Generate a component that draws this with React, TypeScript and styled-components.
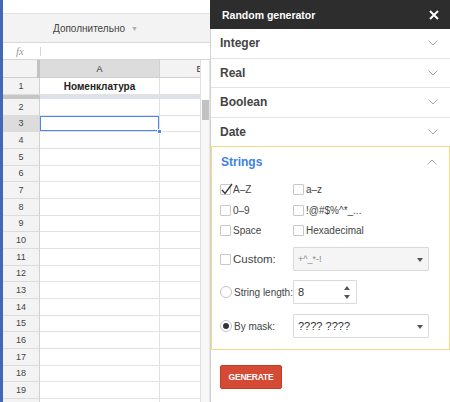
import React from 'react';
import styled, { createGlobalStyle } from 'styled-components';

const GlobalStyle = createGlobalStyle`
  html, body {
    margin: 0;
    padding: 0;
    background: #ffffff;
  }
  body {
    font-family: 'Liberation Sans', Arial, sans-serif;
  }
  * {
    box-sizing: border-box;
  }
`;

const Frame = styled.div`
  display: flex;
  width: 450px;
  height: 402px;
  overflow: hidden;
`;

/* ---------- spreadsheet ---------- */

const SheetPane = styled.div`
  width: 210px;
  flex-shrink: 0;
  display: flex;
  flex-direction: column;
  border-left: 3px solid #4369b2;
  overflow: hidden;
`;

const TopBlank = styled.div`
  height: 13px;
  background: #ffffff;
`;

const Toolbar = styled.div`
  height: 30px;
  display: flex;
  align-items: center;
  padding-left: 50px;
  background: #f3f3f3;
  border-top: 1px solid #e3e3e3;
  border-bottom: 1px solid #d9d9d9;
  font-size: 10px;
  color: #444;
`;

const MenuCaret = styled.span`
  margin-left: 6px;
  font-size: 7px;
  color: #aaa;
`;

const FormulaBar = styled.div`
  height: 17px;
  display: flex;
  align-items: center;
  padding-left: 13px;
  border-bottom: 1px solid #d6d6d6;
`;

const Fx = styled.span`
  font-family: 'Liberation Serif', serif;
  font-style: italic;
  font-size: 11px;
  color: #9a9a9a;
  width: 24px;
`;

const FxDivider = styled.span`
  width: 1px;
  height: 9px;
  background: #d6d6d6;
`;

const GridArea = styled.div`
  flex: 1;
  display: flex;
  min-height: 0;
`;

const Sheet = styled.div`
  width: 197px;
  overflow: hidden;
  display: flex;
  flex-direction: column;
`;

const Row = styled.div<{ $h: number }>`
  display: flex;
  flex-shrink: 0;
  height: ${p => p.$h}px;
  width: 277px;
`;

const Corner = styled.div`
  width: 34px;
  background: #f3f3f3;
  border-bottom: 1px solid #cfcfcf;
`;

const FreezeV = styled.div`
  width: 3px;
  background: #c2c2c2;
`;

const ColHead = styled.div<{ $w: number; $active?: boolean }>`
  width: ${p => p.$w}px;
  display: flex;
  align-items: center;
  justify-content: center;
  background: ${p => (p.$active ? '#dcdcdc' : '#f3f3f3')};
  border-right: 1px solid #d0d0d0;
  border-bottom: 1px solid #cfcfcf;
  font-size: 9px;
  color: #333;
`;

const RowHead = styled.div<{ $active?: boolean }>`
  width: 37px;
  display: flex;
  align-items: center;
  justify-content: center;
  background: ${p => (p.$active ? '#dcdcdc' : '#f3f3f3')};
  border-right: 1px solid #d0d0d0;
  border-bottom: 1px solid #dcdcdc;
  font-size: 9px;
  color: #444;
`;

const Cell = styled.div<{ $w: number; $selected?: boolean }>`
  position: relative;
  width: ${p => p.$w}px;
  display: flex;
  align-items: center;
  justify-content: center;
  border-right: 1px solid #e0e0e0;
  border-bottom: 1px solid #e2e2e2;
  font-size: 10px;
  font-weight: bold;
  color: #222;
  box-shadow: ${p => (p.$selected ? 'inset 0 0 0 1px #4d86f0' : 'none')};
`;

const FillHandle = styled.span`
  position: absolute;
  right: -3px;
  bottom: -3px;
  width: 5px;
  height: 5px;
  background: #4d86f0;
  border: 1px solid #ffffff;
  z-index: 2;
`;

const FreezeH = styled.div`
  display: flex;
  height: 4px;
  flex-shrink: 0;
`;

const FreezeHHead = styled.div`
  width: 37px;
  background: #c6c6c6;
`;

const FreezeHBody = styled.div`
  flex: 1;
  background: #dde2ea;
`;

const ScrollCol = styled.div`
  width: 10px;
  display: flex;
  flex-direction: column;
  border-left: 1px solid #e0e0e0;
  border-right: 1px solid #e6e6e6;
`;

const ScrollTop = styled.div`
  height: 39px;
  background: #ffffff;
`;

const ScrollTrack = styled.div`
  flex: 1;
  background: #f7f7f7;
  padding: 1px 0 0 1px;
`;

const Thumb = styled.div`
  width: 7px;
  height: 20px;
  background: #c2c2c2;
`;

/* ---------- sidebar ---------- */

const Sidebar = styled.div`
  width: 240px;
  flex-shrink: 0;
  display: flex;
  flex-direction: column;
`;

const SideHeader = styled.div`
  height: 29px;
  display: flex;
  align-items: center;
  justify-content: space-between;
  padding: 0 11px 0 12px;
  background: #2d2d2d;
  color: #ffffff;
  font-size: 10.5px;
  font-weight: bold;
`;

const SideBody = styled.div`
  flex: 1;
  border-left: 1px solid #d2d2d2;
  display: flex;
  flex-direction: column;
`;

const SectionHead = styled.div<{ $open?: boolean }>`
  height: 29.5px;
  flex-shrink: 0;
  display: flex;
  align-items: center;
  justify-content: space-between;
  padding: 0 12px 0 9px;
  border-bottom: ${p => (p.$open ? 'none' : '1px solid #e3e3e3')};
  font-size: 12px;
  font-weight: bold;
  color: ${p => (p.$open ? '#3e7fe8' : '#444')};
`;

const OpenSection = styled.div`
  border: 1px solid #f6d888;
  margin-top: -1px;
  height: 204px;
`;

const StringsBody = styled.div`
  padding: 3px 0 0 8px;
  display: flex;
  flex-direction: column;
`;

const CheckGrid = styled.div`
  display: grid;
  grid-template-columns: 73px 1fr;
  grid-auto-rows: 20.5px;
  align-items: center;
`;

const Option = styled.label`
  display: flex;
  align-items: center;
  font-size: 10px;
  color: #444;
`;

const Box = styled.span`
  position: relative;
  width: 11px;
  height: 11px;
  margin-right: 2px;
  border: 1px solid #c8c8c8;
  border-radius: 1px;
  background: #ffffff;
`;

const Tick = styled.svg`
  position: absolute;
  left: 0;
  top: -2px;
`;

const Radio = styled.span<{ $on?: boolean }>`
  width: 12px;
  height: 12px;
  margin-right: 2px;
  border: 1px solid #c4c4c4;
  border-radius: 50%;
  display: flex;
  align-items: center;
  justify-content: center;
  &::after {
    content: '';
    width: 6px;
    height: 6px;
    border-radius: 50%;
    background: ${p => (p.$on ? '#333' : 'transparent')};
  }
`;

const FieldRow = styled.div<{ $top: number }>`
  display: grid;
  grid-template-columns: 73px 1fr;
  align-items: center;
  margin-top: ${p => p.$top}px;
`;

const FieldLabel = styled.span<{ $size?: number }>`
  font-size: ${p => p.$size || 10}px;
  color: #444;
`;

const SelectBox = styled.div<{ $disabled?: boolean; $w: number }>`
  position: relative;
  width: ${p => p.$w}px;
  height: 24px;
  display: flex;
  align-items: center;
  padding-left: 4px;
  border: 1px solid #dadada;
  border-radius: 1px;
  background: ${p => (p.$disabled ? '#f5f5f5' : '#ffffff')};
  font-size: ${p => (p.$disabled ? '9px' : '11px')};
  color: ${p => (p.$disabled ? '#888' : '#333')};
`;

const Caret = styled.span`
  position: absolute;
  right: 5px;
  top: 10px;
  border-left: 3px solid transparent;
  border-right: 3px solid transparent;
  border-top: 4px solid #555;
`;

const Spinner = styled.div`
  position: absolute;
  right: 6px;
  top: 5px;
  display: flex;
  flex-direction: column;
  gap: 5px;
`;

const Arrow = styled.span<{ $up?: boolean }>`
  border-left: 3px solid transparent;
  border-right: 3px solid transparent;
  ${p => (p.$up ? 'border-bottom: 4px solid #555;' : 'border-top: 4px solid #555;')}
`;

const Footer = styled.div`
  padding: 15px 0 0 9px;
`;

const GenerateButton = styled.button`
  width: 62px;
  height: 24px;
  padding: 0;
  background: #d44a35;
  border: 1px solid #c43c28;
  border-radius: 2px;
  color: #ffffff;
  font-family: 'Liberation Sans', Arial, sans-serif;
  font-size: 8.5px;
  font-weight: bold;
  letter-spacing: -0.2px;
  cursor: pointer;
`;

const Chevron = ({ up, color }: { up?: boolean; color: string }) => (
  <svg width="10" height="6" viewBox="0 0 10 6">
    <polyline
      points={up ? '0.5,5.5 5,1 9.5,5.5' : '0.5,0.5 5,5 9.5,0.5'}
      fill="none"
      stroke={color}
      strokeWidth="1"
    />
  </svg>
);

const CheckBox = ({ checked }: { checked?: boolean }) => (
  <Box>
    {checked && (
      <Tick width="12" height="12" viewBox="0 0 12 12">
        <polyline points="1,7 4,10.5 11,1" fill="none" stroke="#333" strokeWidth="1.3" />
      </Tick>
    )}
  </Box>
);

const ROW_H = 16.67;
const rows = Array.from({ length: 18 }, (_, i) => i + 2);
const collapsed = ['Integer', 'Real', 'Boolean', 'Date'];

const App: React.FC = () => {
  return (
    <>
      <GlobalStyle />
      <Frame>
        <SheetPane>
          <TopBlank />
          <Toolbar>
            Дополнительно<MenuCaret>▼</MenuCaret>
          </Toolbar>
          <FormulaBar>
            <Fx>fx</Fx>
            <FxDivider />
          </FormulaBar>
          <GridArea>
            <Sheet>
              <Row $h={18}>
                <Corner />
                <FreezeV />
                <ColHead $w={120} $active>A</ColHead>
                <ColHead $w={80}>B</ColHead>
              </Row>
              <Row $h={17}>
                <RowHead>1</RowHead>
                <Cell $w={120}>Номенклатура</Cell>
                <Cell $w={80} />
              </Row>
              <FreezeH>
                <FreezeHHead />
                <FreezeHBody />
              </FreezeH>
              {rows.map(n => (
                <Row key={n} $h={ROW_H}>
                  <RowHead $active={n === 3}>{n}</RowHead>
                  <Cell $w={120} $selected={n === 3}>
                    {n === 3 && <FillHandle />}
                  </Cell>
                  <Cell $w={80} />
                </Row>
              ))}
              <Row $h={ROW_H}>
                <RowHead />
                <Cell $w={120} />
                <Cell $w={80} />
              </Row>
            </Sheet>
            <ScrollCol>
              <ScrollTop />
              <ScrollTrack>
                <Thumb />
              </ScrollTrack>
            </ScrollCol>
          </GridArea>
        </SheetPane>

        <Sidebar>
          <SideHeader>
            Random generator
            <svg width="10" height="10" viewBox="0 0 10 10">
              <path d="M1 1 L9 9 M9 1 L1 9" stroke="#fff" strokeWidth="2" />
            </svg>
          </SideHeader>
          <SideBody>
            {collapsed.map(name => (
              <SectionHead key={name}>
                {name}
                <Chevron color="#aaa" />
              </SectionHead>
            ))}
            <OpenSection>
              <SectionHead $open>
                Strings
                <Chevron up color="#aaa" />
              </SectionHead>
              <StringsBody>
                <CheckGrid>
                  <Option><CheckBox checked />A–Z</Option>
                  <Option><CheckBox />a–z</Option>
                  <Option><CheckBox />0–9</Option>
                  <Option><CheckBox />!@#$%^*_...</Option>
                  <Option><CheckBox />Space</Option>
                  <Option><CheckBox />Hexadecimal</Option>
                </CheckGrid>
                <FieldRow $top={6}>
                  <Option>
                    <CheckBox />
                    <FieldLabel $size={11.5}>Custom:</FieldLabel>
                  </Option>
                  <SelectBox $disabled $w={136}>
                    +^_*-!
                    <Caret />
                  </SelectBox>
                </FieldRow>
                <FieldRow $top={9}>
                  <Option>
                    <Radio />
                    <FieldLabel>String length:</FieldLabel>
                  </Option>
                  <SelectBox $w={64}>
                    8
                    <Spinner>
                      <Arrow $up />
                      <Arrow />
                    </Spinner>
                  </SelectBox>
                </FieldRow>
                <FieldRow $top={10}>
                  <Option>
                    <Radio $on />
                    <FieldLabel>By mask:</FieldLabel>
                  </Option>
                  <SelectBox $w={136}>
                    ???? ????
                    <Caret />
                  </SelectBox>
                </FieldRow>
              </StringsBody>
            </OpenSection>
            <Footer>
              <GenerateButton>GENERATE</GenerateButton>
            </Footer>
          </SideBody>
        </Sidebar>
      </Frame>
    </>
  );
};

export default App;
